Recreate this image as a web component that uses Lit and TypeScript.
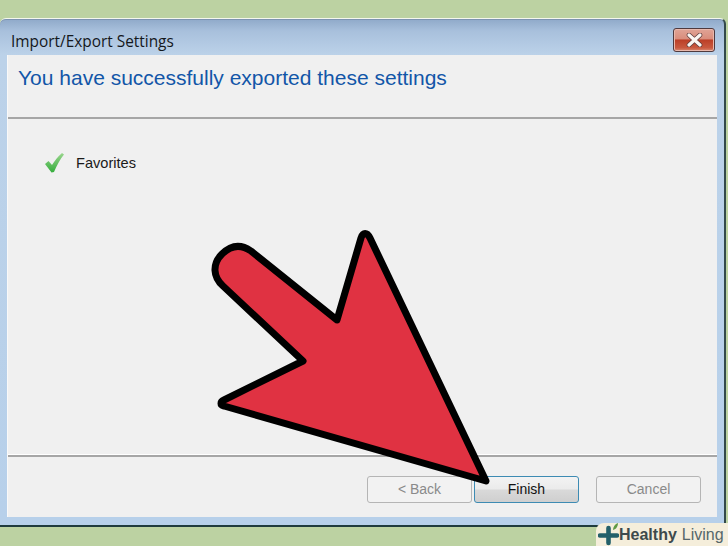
import { LitElement, html, css } from "lit";
import { customElement } from "lit/decorators.js";

@customElement("app-root")
export class AppRoot extends LitElement {
  static styles = css`
    :host {
      display: block;
      position: relative;
      width: 728px;
      height: 546px;
      overflow: hidden;
      background: #bcd2a2;
      font-family: "Liberation Sans", Arial, sans-serif;
    }
    .page {
      height: 100%;
      box-sizing: border-box;
      padding: 18px 2px 19px 0;
    }
    .window {
      box-sizing: border-box;
      height: 509px;
      display: flex;
      flex-direction: column;
      border-top: 1px solid #f4f7ee;
      border-bottom: 2px solid #1f3b3d;
      border-right: 2px solid #33494b;
      border-radius: 6px 6px 0 0;
      background: linear-gradient(180deg, #8fa9c9 0, #a8c0dc 12px, #bcd2e9 36px, #b7d0ea 100%);
      box-shadow: inset 0 1px 0 #7d93b1;
    }
    .titlebar {
      flex: none;
      height: 36px;
      display: flex;
      align-items: center;
      justify-content: space-between;
      padding: 0 9px 0 11px;
    }
    .title {
      font-family: "Open Sans", sans-serif;
      font-size: 15.4px;
      color: #14181c;
      padding-top: 9px;
    }
    .close {
      width: 42px;
      height: 24px;
      margin-top: 5px;
      box-sizing: border-box;
      display: flex;
      align-items: center;
      justify-content: center;
      border: 1px solid #4f3a3e;
      border-radius: 3px;
      background: linear-gradient(180deg, #e0a496 0, #d98d7c 45%, #bb3f27 50%, #c9593f 85%, #d98a72 100%);
      box-shadow: inset 0 0 0 1px #e9b9ad;
    }
    .panel {
      flex: 1;
      margin: 0 7px 8px 8px;
      display: flex;
      flex-direction: column;
      background: #f0f0f0;
      box-shadow: -1px 0 0 #f9f9f9;
    }
    .heading {
      flex: none;
      height: 64px;
      box-sizing: border-box;
      padding: 10px 0 0 10px;
      font-size: 21px;
      line-height: 26px;
      color: #1256a8;
      border-bottom: 2px solid #a6a6a6;
    }
    .body {
      flex: 1;
      padding: 34px 0 0 37px;
    }
    .item {
      display: flex;
      align-items: center;
      gap: 11px;
      font-size: 14.6px;
      color: #1a1a1a;
    }
    .footer {
      flex: none;
      height: 62px;
      box-sizing: border-box;
      display: flex;
      align-items: flex-start;
      padding: 19px 0 0 359px;
      border-top: 2px solid #a6a6a6;
      box-shadow: 0 -1px 0 #fff;
    }
    .btn {
      width: 105px;
      height: 27px;
      box-sizing: border-box;
      display: flex;
      align-items: center;
      justify-content: center;
      font-size: 14px;
      color: #8a8a8a;
      background: #f2f2f2;
      border: 1px solid #b5b5b5;
      border-radius: 3px;
      padding-bottom: 1px;
    }
    .btn.primary {
      margin-left: 2px;
      color: #111;
      border: 1.5px solid #3d8bb3;
      background: linear-gradient(180deg, #f3f3f3 0, #ebebeb 48%, #d9d9d9 52%, #cfcfcf 100%);
    }
    .btn.cancel {
      margin-left: 17px;
    }
    .arrow {
      position: absolute;
      left: 0;
      top: 0;
      width: 728px;
      height: 546px;
      pointer-events: none;
    }
    .logo {
      position: absolute;
      right: 0;
      bottom: 0;
      width: 132px;
      height: 23px;
      box-sizing: border-box;
      display: flex;
      align-items: center;
      padding-left: 2px;
      background: #f5eedb;
      border-radius: 8px 0 0 0;
      font-size: 16px;
      color: #3d4a4c;
    }
    .logo span {
      margin-left: 5px;
      color: #56676a;
    }
  `;

  render() {
    return html`
      <div class="page">
        <div class="window">
          <div class="titlebar">
            <div class="title">Import/Export Settings</div>
            <div class="close">
              <svg width="17" height="14" viewBox="0 0 17 14">
                <path d="M3 2 L14 12 M14 2 L3 12" stroke="#5a3a3a" stroke-width="4.6" stroke-linecap="round" />
                <path d="M3 2 L14 12 M14 2 L3 12" stroke="#fbf6f2" stroke-width="3.2" stroke-linecap="round" />
              </svg>
            </div>
          </div>
          <div class="panel">
            <div class="heading">You have successfully exported these settings</div>
            <div class="body">
              <div class="item">
                <svg width="20" height="20" viewBox="0 0 20 20">
                  <defs>
                    <linearGradient id="chk" x1="0" y1="0" x2="0" y2="1">
                      <stop offset="0" stop-color="#9ad68e" />
                      <stop offset="1" stop-color="#35ad3c" />
                    </linearGradient>
                  </defs>
                  <path d="M0 11 L3.500 8 L7 12 C9.500 8 13 3.500 17 0 L19 1.500 C15 6.500 12 12 9 19 L6.500 19.500 Z" fill="url(#chk)" />
                </svg>
                Favorites
              </div>
            </div>
            <div class="footer">
              <div class="btn">&lt; Back</div>
              <div class="btn primary">Finish</div>
              <div class="btn cancel">Cancel</div>
            </div>
          </div>
        </div>
      </div>
      <svg class="arrow" viewBox="0 0 728 546">
        <path
          d="M486 481 L370 238 C367 232 363 232 361 238 L337 320 L251 251 C241 244 231 245 222 254 C212 264 213 277 223 286 L303 361 L224 400 C220 402 220 405 224 406 Z"
          fill="#e03242"
          stroke="#000"
          stroke-width="7"
          stroke-linejoin="round"
        />
      </svg>
      <div class="logo">
        <svg width="21" height="23" viewBox="0 0 21 23">
          <path d="M10.500 5 V20 M2 12.500 H19" stroke="#24606a" stroke-width="4.600" stroke-linecap="round" />
          <path d="M15 7 C15 4 17 1 20 0 C20 3 18.500 6 15 7 Z" fill="#5f9a45" />
        </svg>
        <b>Healthy</b><span>Living</span>
      </div>
    `;
  }
}
